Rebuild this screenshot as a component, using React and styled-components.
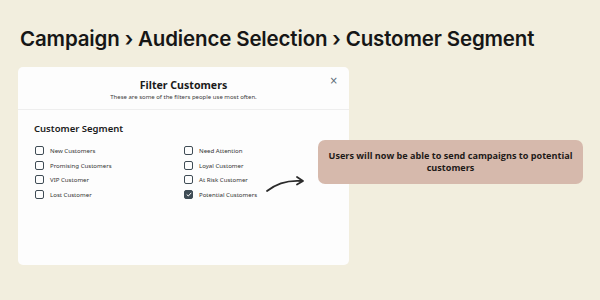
import React from 'react';
import styled, { createGlobalStyle } from 'styled-components';

const GlobalStyle = createGlobalStyle`
  html, body {
    margin: 0;
    background: #f2eede;
  }
`;

const Page = styled.main`
  width: 600px;
  height: 300px;
  box-sizing: border-box;
  padding: 26px 0 0 20px;
  font-family: Inter, 'Noto Sans', sans-serif;
  color: #161616;
  overflow: hidden;
`;

const Breadcrumb = styled.h1`
  margin: 0;
  font-size: 20.5px;
  font-weight: 600;
  letter-spacing: -0.15px;
  line-height: 26px;
`;

const Stage = styled.section`
  position: relative;
  margin: 15px 0 0 -2px;
`;

const Card = styled.div`
  width: 331px;
  height: 198px;
  background: #fdfdfd;
  border-radius: 5px;
  display: flex;
  flex-direction: column;
  position: relative;
`;

const CardHeader = styled.header`
  height: 43px;
  box-sizing: border-box;
  border-bottom: 1px solid #eeeeee;
  display: flex;
  flex-direction: column;
  align-items: center;
  padding-top: 10px;
`;

const CardTitle = styled.h2`
  margin: 0;
  font-family: 'Noto Sans', sans-serif;
  font-size: 10.6px;
  font-weight: 700;
  line-height: 16px;
  color: #1b1b1b;
`;

const CardSubtitle = styled.p`
  margin: 0;
  font-family: 'Noto Sans', sans-serif;
  font-size: 6px;
  line-height: 9px;
  color: #3a3a3a;
`;

const CloseButton = styled.span`
  position: absolute;
  top: 8px;
  right: 11px;
  font-size: 10px;
  color: #5a6a75;
  font-family: 'DejaVu Sans', sans-serif;
`;

const CardBody = styled.div`
  padding: 12px 16px 0;
`;

const SectionTitle = styled.h3`
  margin: 0 0 7px;
  font-family: 'Noto Sans', sans-serif;
  font-size: 9.5px;
  font-weight: 600;
  line-height: 14px;
  color: #1b1b1b;
`;

const OptionGrid = styled.div`
  display: grid;
  grid-template-columns: 149px 1fr;
  grid-auto-rows: 14.7px;
`;

const Option = styled.label`
  display: flex;
  align-items: center;
  gap: 6px;
  font-family: 'Noto Sans', sans-serif;
  font-size: 6.1px;
  color: #333;
`;

const Box = styled.span`
  width: 7px;
  height: 7px;
  margin-left: 1px;
  border: 1.2px solid #3f4c55;
  border-radius: 2px;
  background: ${(p) => (p.checked ? '#3f4c55' : 'transparent')};
  display: flex;
  align-items: center;
  justify-content: center;
`;

const Callout = styled.div`
  position: absolute;
  left: 300px;
  top: 73px;
  width: 265px;
  height: 44px;
  box-sizing: border-box;
  background: #d6b9ac;
  border-radius: 7px;
  display: flex;
  align-items: center;
  justify-content: center;
  text-align: center;
  padding: 0 4px;
  font-family: 'Open Sans', sans-serif;
  font-size: 9.1px;
  font-weight: 700;
  line-height: 12px;
  color: #1e1a18;
`;

const Arrow = styled.svg`
  position: absolute;
  left: 247px;
  top: 106px;
`;

const left = ['New Customers', 'Promising Customers', 'VIP Customer', 'Lost Customer'];
const right = ['Need Attention', 'Loyal Customer', 'At Risk Customer', 'Potential Customers'];

const Check = ({ label, checked }) => (
  <Option>
    <Box checked={checked}>
      {checked && (
        <svg width="6" height="5" viewBox="0 0 6 5">
          <path d="M0.7 2.5 L2.3 4 L5.3 0.8" stroke="#fff" strokeWidth="1" fill="none" />
        </svg>
      )}
    </Box>
    {label}
  </Option>
);

const App = () => {
  const rows = left.flatMap((l, i) => [
    <Check key={l} label={l} />,
    <Check key={right[i]} label={right[i]} checked={right[i] === 'Potential Customers'} />,
  ]);

  return (
    <Page>
      <GlobalStyle />
      <Breadcrumb>Campaign › Audience Selection › Customer Segment</Breadcrumb>
      <Stage>
        <Card>
          <CardHeader>
            <CardTitle>Filter Customers</CardTitle>
            <CardSubtitle>These are some of the filters people use most often.</CardSubtitle>
          </CardHeader>
          <CloseButton>×</CloseButton>
          <CardBody>
            <SectionTitle>Customer Segment</SectionTitle>
            <OptionGrid>{rows}</OptionGrid>
          </CardBody>
        </Card>
        <Arrow width="44" height="20" viewBox="0 0 44 20">
          <path d="M2 18 C12 10, 24 7, 37 8" stroke="#2b2b2b" strokeWidth="1.8" fill="none" strokeLinecap="round" />
          <path d="M32 4 L38 8 L32 11.5" stroke="#2b2b2b" strokeWidth="1.8" fill="none" strokeLinecap="round" strokeLinejoin="round" />
        </Arrow>
        <Callout>Users will now be able to send campaigns to potential customers</Callout>
      </Stage>
    </Page>
  );
};

export default App;
